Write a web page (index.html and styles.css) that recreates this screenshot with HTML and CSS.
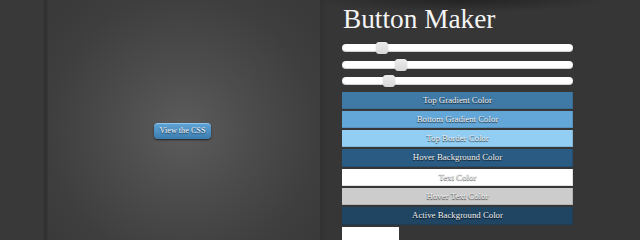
FILE: index.html
```html
<!DOCTYPE html>
<html lang="en">
<head>
<meta charset="utf-8">
<title>Button Maker</title>
<link rel="stylesheet" href="styles.css">
</head>
<body>
<div class="page">
  <div class="strip"></div>
  <div class="divider"></div>
  <div class="preview">
    <a class="demo-button" href="#">View the CSS</a>
  </div>
  <div class="panel">
    <h1 class="title">Button Maker</h1>
    <div class="sliders">
      <div class="slider"><div class="track"></div><div class="thumb" style="left:34px"></div></div>
      <div class="slider"><div class="track"></div><div class="thumb" style="left:53px"></div></div>
      <div class="slider"><div class="track"></div><div class="thumb" style="left:41px"></div></div>
    </div>
    <div class="colors">
      <div class="color c-top">Top Gradient Color</div>
      <div class="color c-bottom">Bottom Gradient Color</div>
      <div class="color c-border">Top Border Color</div>
      <div class="color c-hover">Hover Background Color</div>
      <div class="color c-text">Text Color</div>
      <div class="color c-hovertext">Hover Text Color</div>
      <div class="color c-active">Active Background Color</div>
      <div class="field"></div>
    </div>
  </div>
</div>
</body>
</html>
```

FILE: styles.css
```css
html, body {
  margin: 0;
  padding: 0;
}
html {
  background: #363636;
}
body {
  width: 640px;
  min-height: 100vh;
  overflow: hidden;
  background: #363636;
  font-family: "Liberation Serif", "DejaVu Serif", serif;
}
.page {
  display: grid;
  grid-template-columns: 44px 4px 272px 320px;
  min-height: 100vh;
}
.strip {
  background: #393939;
}
.divider {
  background: linear-gradient(to right, #2f2f2f, #333 60%, #383838);
}
.preview {
  display: flex;
  justify-content: center;
  align-items: flex-start;
  padding-top: 123px;
  padding-right: 3px;
  background: radial-gradient(circle 170px at 135px 130px, #5c5c5c 0%, #4c4c4c 40%, #3e3e3e 80%, #3a3a3a 100%);
}
.demo-button {
  display: block;
  width: 57px;
  height: 16px;
  box-sizing: border-box;
  border-radius: 4px;
  border-top: 1px solid #8cc6ee;
  background: linear-gradient(to bottom, #5fa3d4, #3a7cb0);
  box-shadow: 0 1px 2px rgba(0,0,0,0.6);
  color: #f4f4f4;
  font-size: 8.2px;
  line-height: 14px;
  text-align: center;
  text-decoration: none;
  text-shadow: 0 1px 1px rgba(0,0,0,0.6);
}
.panel {
  padding: 4px 0 0 22px;
  background:
    radial-gradient(150px 12px at 140px 0, rgba(0,0,0,0.35), rgba(0,0,0,0) 100%),
    linear-gradient(to right, rgba(0,0,0,0.08), rgba(0,0,0,0) 8px),
    #363636;
}
.title {
  margin: 0;
  font-size: 27.3px;
  line-height: 30px;
  font-weight: normal;
  color: #f4f4f4;
  padding-left: 1px;
}
.sliders {
  margin-top: 8px;
  width: 231px;
}
.slider {
  position: relative;
  height: 12px;
  margin-bottom: 4.5px;
}
.track {
  position: absolute;
  left: 0;
  right: 0;
  top: 2px;
  height: 8px;
  border-radius: 4px;
  background: #fff;
  box-shadow: inset 0 -1px 1px rgba(0,0,0,0.2);
}
.thumb {
  position: absolute;
  top: 0;
  width: 12px;
  height: 12px;
  border-radius: 3px;
  background: linear-gradient(to bottom, #ececec, #d8d8d8);
  box-shadow: 0 0 1px rgba(0,0,0,0.4);
}
.colors {
  margin-top: 0.5px;
  width: 231px;
  display: flex;
  flex-direction: column;
  gap: 2px;
}
.color {
  height: 17.3px;
  line-height: 17.3px;
  text-align: center;
  font-size: 8.8px;
  color: #f2f2f2;
  text-shadow: 0 1px 1px rgba(0,0,0,0.85);
  box-shadow: inset -1px -1px 0 rgba(0,0,0,0.12);
}
.c-top { background: #3f7aa7; }
.c-bottom { background: #63a7d9; }
.c-border { background: #92cef3; }
.c-hover { background: #2a5b82; }
.c-text { background: #ffffff; }
.c-hovertext { background: #cccccc; }
.c-active { background: #1f4563; }
.field {
  width: 57px;
  height: 16px;
  background: #fff;
}
```
